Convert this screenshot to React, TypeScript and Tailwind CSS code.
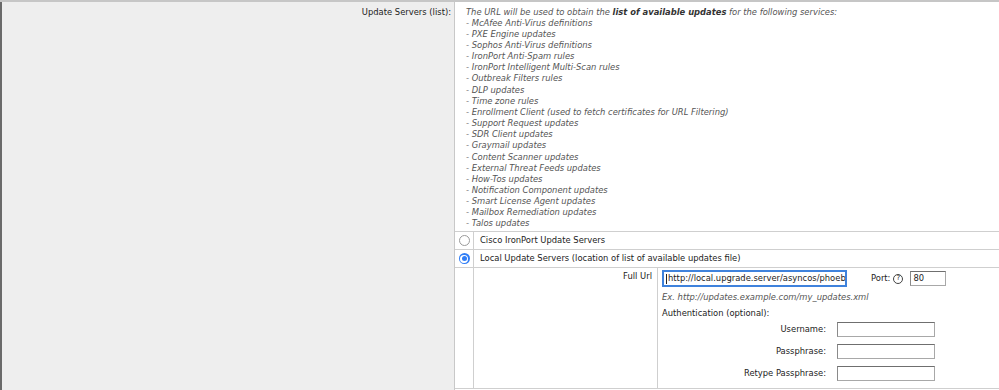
const services = [
  "McAfee Anti-Virus definitions",
  "PXE Engine updates",
  "Sophos Anti-Virus definitions",
  "IronPort Anti-Spam rules",
  "IronPort Intelligent Multi-Scan rules",
  "Outbreak Filters rules",
  "DLP updates",
  "Time zone rules",
  "Enrollment Client (used to fetch certificates for URL Filtering)",
  "Support Request updates",
  "SDR Client updates",
  "Graymail updates",
  "Content Scanner updates",
  "External Threat Feeds updates",
  "How-Tos updates",
  "Notification Component updates",
  "Smart License Agent updates",
  "Mailbox Remediation updates",
  "Talos updates",
];

const Radio = ({ checked }: { checked?: boolean }) =>
  checked ? (
    <span className="flex h-[11px] w-[11px] items-center justify-center rounded-full bg-[#2f7df6]">
      <span className="flex h-[8px] w-[8px] items-center justify-center rounded-full bg-white">
        <span className="h-[5px] w-[5px] rounded-full bg-[#2f7df6]" />
      </span>
    </span>
  ) : (
    <span className="h-[11px] w-[11px] rounded-full border border-[#9a9a9a] bg-white" />
  );

const TextBox = ({ width }: { width: string }) => (
  <div className={`h-[15px] ${width} border border-[#a8a8a8] border-t-[#6f6f6f] border-l-[#8a8a8a] bg-white`} />
);

export default function App() {
  return (
    <div
      className="h-[390px] w-[999px] overflow-hidden border-t-2 border-[#c6c6c6] bg-white text-[8.4px] leading-[11.16px] text-[#222]"
      style={{ fontFamily: '"DejaVu Sans", Verdana, sans-serif' }}
    >
      <div className="flex h-full">
        <div className="w-[455px] shrink-0 border-l-2 border-r border-l-[#6a6a6a] border-r-[#c8c8c8] bg-[#eeeeee] pr-[3px] pt-[4.5px] text-right">
          Update Servers (list):
        </div>

        <div className="flex flex-1 flex-col">
          <div className="pb-[1.5px] pl-[11px] pt-[4.5px] italic text-[#555]">
            <div>
              The URL will be used to obtain the <b className="text-[#333]">list of available updates</b> for the
              following services:
            </div>
            {services.map((s) => (
              <div key={s}>- {s}</div>
            ))}
          </div>

          <div className="flex flex-1 flex-col border-t border-[#cfcfcf]">
            <div className="flex h-[18px] border-b border-[#cfcfcf]">
              <div className="flex w-[19px] shrink-0 items-center justify-center border-r border-[#cfcfcf]">
                <Radio />
              </div>
              <div className="flex items-center pl-[6px]">Cisco IronPort Update Servers</div>
            </div>
            <div className="flex h-[18px] border-b border-[#cfcfcf]">
              <div className="flex w-[19px] shrink-0 items-center justify-center border-r border-[#cfcfcf]">
                <Radio checked />
              </div>
              <div className="flex items-center pl-[6px]">
                Local Update Servers (location of list of available updates file)
              </div>
            </div>

            <div className="flex h-[121px] border-b border-[#cfcfcf]">
              <div className="w-[19px] shrink-0 border-r border-[#cfcfcf]" />
              <div className="w-[184px] shrink-0 border-r border-[#cfcfcf] pr-[5px] pt-[3px] text-right">
                Full Url
              </div>
              <div className="flex-1 pl-[4px] pt-[2px]">
                <div className="flex items-center">
                  <div className="flex h-[17px] w-[185px] items-center overflow-hidden whitespace-nowrap border-2 border-[#3f82dc] bg-white pl-[2px]">
                    <span className="mr-px h-[10px] w-px shrink-0 bg-[#222]" />
                    <span className="overflow-hidden">http://local.upgrade.server/asyncos/phoebe</span>
                  </div>
                  <span className="ml-[24px]">Port:</span>
                  <span className="ml-[3px] flex h-[10px] w-[10px] items-center justify-center rounded-full border border-[#444] text-[7px] leading-none">
                    ?
                  </span>
                  <div className="ml-[7px] flex h-[15px] w-[36px] items-center border border-[#a8a8a8] border-t-[#6f6f6f] border-l-[#8a8a8a] bg-white pl-[2px]">
                    80
                  </div>
                </div>
                <div className="mt-[5px] italic text-[#555]">Ex. http://updates.example.com/my_updates.xml</div>
                <div className="mt-[5px]">Authentication (optional):</div>
                <div className="mt-[3px] grid grid-cols-[175px_auto] items-center gap-y-[7px]">
                  <div className="pr-[11px] text-right">Username:</div>
                  <TextBox width="w-[98px]" />
                  <div className="pr-[11px] text-right">Passphrase:</div>
                  <TextBox width="w-[98px]" />
                  <div className="pr-[11px] text-right">Retype Passphrase:</div>
                  <TextBox width="w-[98px]" />
                </div>
              </div>
            </div>
          </div>
        </div>
      </div>
    </div>
  );
}
